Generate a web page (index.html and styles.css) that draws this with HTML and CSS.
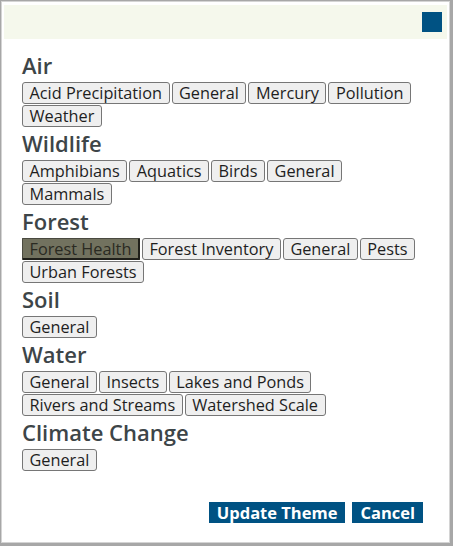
FILE: index.html
```html
<!DOCTYPE html>
<html lang="en">
<head>
<meta charset="utf-8">
<title>Select Theme</title>
<link rel="stylesheet" href="styles.css">
</head>
<body>
<div class="dialog">
  <div class="titlebar">
    <button class="close" aria-label="Close"></button>
  </div>
  <div class="content">
    <section class="theme">
      <h2 class="theme-title">Air</h2>
      <div class="chips">
        <button class="chip">Acid Precipitation</button>
        <button class="chip">General</button>
        <button class="chip">Mercury</button>
        <button class="chip">Pollution</button>
        <button class="chip">Weather</button>
      </div>
    </section>
    <section class="theme">
      <h2 class="theme-title">Wildlife</h2>
      <div class="chips">
        <button class="chip">Amphibians</button>
        <button class="chip">Aquatics</button>
        <button class="chip">Birds</button>
        <button class="chip">General</button>
        <button class="chip">Mammals</button>
      </div>
    </section>
    <section class="theme">
      <h2 class="theme-title">Forest</h2>
      <div class="chips">
        <button class="chip selected">Forest Health</button>
        <button class="chip">Forest Inventory</button>
        <button class="chip">General</button>
        <button class="chip">Pests</button>
        <button class="chip">Urban Forests</button>
      </div>
    </section>
    <section class="theme">
      <h2 class="theme-title">Soil</h2>
      <div class="chips">
        <button class="chip">General</button>
      </div>
    </section>
    <section class="theme">
      <h2 class="theme-title">Water</h2>
      <div class="chips">
        <button class="chip">General</button>
        <button class="chip">Insects</button>
        <button class="chip">Lakes and Ponds</button>
        <button class="chip">Rivers and Streams</button>
        <button class="chip">Watershed Scale</button>
      </div>
    </section>
    <section class="theme">
      <h2 class="theme-title">Climate Change</h2>
      <div class="chips">
        <button class="chip">General</button>
      </div>
    </section>
  </div>
  <div class="footer">
    <button class="action">Update Theme</button>
    <button class="action">Cancel</button>
  </div>
</div>
</body>
</html>
```
FILE: styles.css
```css
html, body {
  margin: 0;
  padding: 0;
}
body {
  background: #a7a7a7;
  padding: 1px 0 0 1px;
  font-family: "Open Sans", "Noto Sans", sans-serif;
}
.dialog {
  box-sizing: border-box;
  width: 449px;
  height: 542px;
  background: #ffffff;
  border: 1px solid #d4d4d4;
  padding: 3px 2px 0 2px;
  display: flex;
  flex-direction: column;
}
.titlebar {
  height: 34px;
  background: #f5f8ec;
  display: flex;
  align-items: center;
  justify-content: flex-end;
  padding-right: 5px;
}
.close {
  width: 20px;
  height: 20px;
  border: none;
  padding: 0;
  background: #005283;
}
.content {
  padding: 13px 0 0 18px;
}
.theme {
  margin-bottom: 3px;
}
.theme-title {
  margin: 0 0 4px 0;
  font-size: 22px;
  line-height: 26px;
  font-weight: 600;
  color: #3d4548;
}
.chips {
  display: flex;
  flex-wrap: wrap;
  column-gap: 2px;
  row-gap: 1px;
  padding-right: 20px;
}
.chip {
  box-sizing: border-box;
  height: 22px;
  margin: 0;
  padding: 0 6.5px;
  font-family: "Open Sans", "Noto Sans", sans-serif;
  font-size: 16.3px;
  line-height: 20px;
  color: #1e1e1e;
  background: #efefef;
  border: 1px solid #767676;
  border-radius: 3px;
}
.chip.selected {
  background: #72725f;
  border-color: #4a4a40 #1f1f1a #1f1f1a #4a4a40;
  border-width: 1px 2px 2px 1px;
  border-radius: 1px;
  color: #2a2a22;
}
.footer {
  margin-top: 28px;
  display: flex;
  justify-content: flex-end;
  gap: 7px;
  padding-right: 24px;
}
.action {
  height: 21px;
  margin: 0;
  border: none;
  padding: 0 8px;
  background: #005283;
  color: #ffffff;
  font-family: "Open Sans", "Noto Sans", sans-serif;
  font-weight: 700;
  font-size: 16.5px;
  line-height: 21px;
}
```
